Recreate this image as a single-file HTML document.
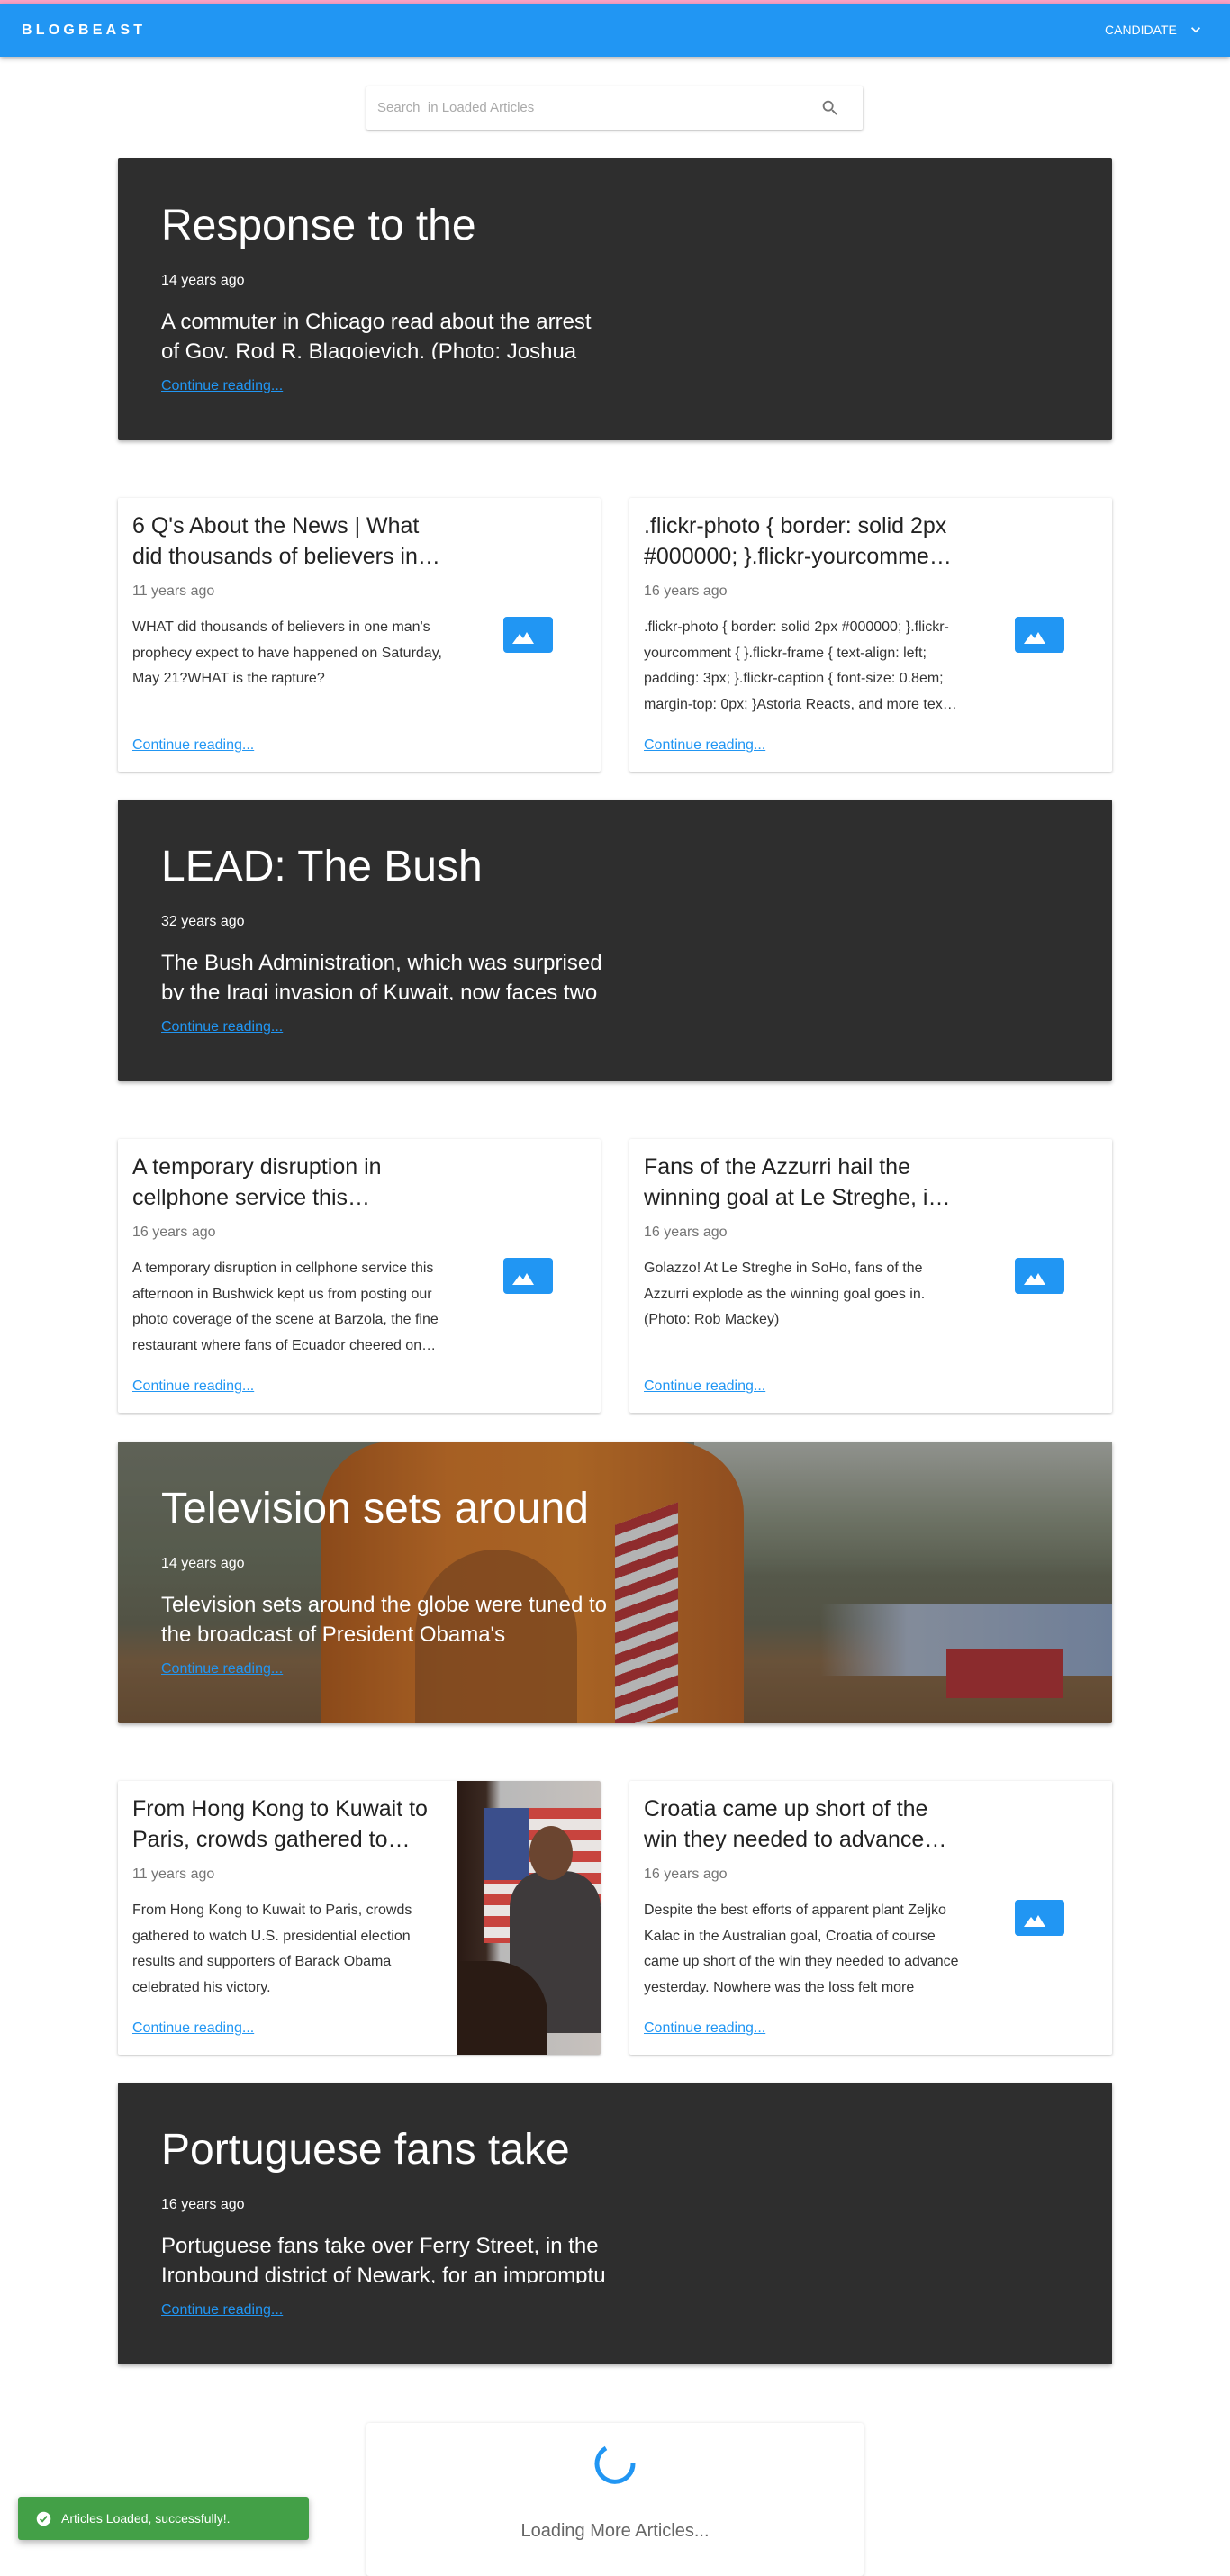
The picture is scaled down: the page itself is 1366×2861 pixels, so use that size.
<!DOCTYPE html>
<html><head><meta charset="utf-8"><style>
*{margin:0;padding:0;box-sizing:border-box}
body{width:1366px;height:2841px;background:#fff;font-family:"Liberation Sans",Arial,sans-serif;position:relative;overflow:hidden}
.abs{position:absolute}
#pink{left:0;top:0;width:1366px;height:4px;background:#f8a1c4}
#hdr{left:0;top:4px;width:1366px;height:59px;background:#2196f3;box-shadow:0 2px 5px rgba(0,0,0,.3)}
.logo{left:24px;top:20px;color:#fff;font-weight:bold;font-size:16px;letter-spacing:4.2px;line-height:20px}
.cand{left:1227px;top:21px;color:#fff;font-size:14px;line-height:16px}
.search{left:407px;top:96px;width:551px;height:48px;background:#fff;box-shadow:0 1px 3px rgba(0,0,0,.3);border-radius:2px}
.search span{position:absolute;left:12px;top:15px;font-size:15px;color:#aaa;line-height:18px}
.hero{left:131px;width:1104px;height:313px;background:#2e2e2e;border-radius:2px;box-shadow:0 2px 4px rgba(0,0,0,.3);overflow:hidden}
.hero .t{position:absolute;left:48px;top:47px;font-size:48px;line-height:56px;color:#fff;white-space:nowrap}
.hero .d{position:absolute;left:48px;top:126px;font-size:16px;line-height:20px;color:#fff}
.hero .p{position:absolute;left:48px;top:165px;width:495px;height:58px;overflow:hidden;font-size:24px;line-height:33px;color:#fff}
.hero .c,.card .c{position:absolute;left:48px;top:243px;font-size:16px;line-height:20px;color:#2196f3;text-decoration:underline}
.card{width:536px;height:304px;background:#fff;border-radius:2px;box-shadow:0 1px 3px rgba(0,0,0,.25);overflow:hidden}
.card .t{position:absolute;left:16px;top:14px;width:345px;font-size:25px;line-height:34px;color:#222;display:-webkit-box;-webkit-line-clamp:2;-webkit-box-orient:vertical;overflow:hidden}
.card .d{position:absolute;left:16px;top:94px;font-size:16px;line-height:20px;color:#757575}
.card .p{position:absolute;left:16px;top:130px;width:350px;font-size:16px;line-height:28.5px;color:#333;display:-webkit-box;-webkit-line-clamp:4;-webkit-box-orient:vertical;overflow:hidden}
.card .c{left:16px;top:265px}
.card svg.im{position:absolute;left:428px;top:132px}
.L{left:131px}.R{left:699px}
</style></head><body>
<div id="pink" class="abs"></div>
<div id="hdr" class="abs">
<div class="abs logo">BLOGBEAST</div>
<div class="abs cand">CANDIDATE</div>
<svg class="abs" style="left:1318px;top:19px" width="20" height="20" viewBox="0 0 24 24"><path d="M7.4 8.6L12 13.2l4.6-4.6L18 10l-6 6-6-6z" fill="#fff"/></svg>
</div>
<div class="abs search"><span>Search &nbsp;in Loaded Articles</span>
<svg style="position:absolute;left:504px;top:13px" width="22" height="22" viewBox="0 0 24 24"><path d="M15.5 14h-.8l-.3-.3A6.5 6.5 0 1 0 9.5 16a6.5 6.5 0 0 0 4.2-1.6l.3.3v.8l5 5 1.5-1.5-5-5zm-6 0A4.5 4.5 0 1 1 14 9.5 4.5 4.5 0 0 1 9.5 14z" fill="#757575"/></svg></div>

<div class="abs hero" style="top:176px"><div class="t">Response to the</div><div class="d">14 years ago</div><div class="p">A commuter in Chicago read about the arrest of Gov. Rod R. Blagojevich. (Photo: Joshua Lott for The New York Times)</div><div class="c">Continue reading...</div></div>

<div class="abs card L" style="top:553px"><div class="t">6 Q's About the News | What did thousands of believers in one man's prophecy</div><div class="d">11 years ago</div><div class="p">WHAT did thousands of believers in one man's prophecy expect to have happened on Saturday, May 21?WHAT is the rapture?</div>
<svg class="im" width="55" height="40" viewBox="0 0 55 40"><rect width="55" height="40" rx="4" fill="#2196f3"/><path d="M10 30L18 19l4 5 4-7 8 13z" fill="#fff"/></svg><div class="c">Continue reading...</div></div>
<div class="abs card R" style="top:553px"><div class="t">.flickr-photo { border: solid 2px #000000; }.flickr-yourcomment { }.flickr-frame</div><div class="d">16 years ago</div><div class="p">.flickr-photo { border: solid 2px #000000; }.flickr-yourcomment { }.flickr-frame { text-align: left; padding: 3px; }.flickr-caption { font-size: 0.8em; margin-top: 0px; }Astoria Reacts, and more text here</div>
<svg class="im" width="55" height="40" viewBox="0 0 55 40"><rect width="55" height="40" rx="4" fill="#2196f3"/><path d="M10 30L18 19l4 5 4-7 8 13z" fill="#fff"/></svg><div class="c">Continue reading...</div></div>

<div class="abs hero" style="top:888px"><div class="t">LEAD: The Bush</div><div class="d">32 years ago</div><div class="p">The Bush Administration, which was surprised by the Iraqi invasion of Kuwait, now faces two problems</div><div class="c">Continue reading...</div></div>

<div class="abs card L" style="top:1265px"><div class="t">A temporary disruption in cellphone service this afternoon in Bushwick</div><div class="d">16 years ago</div><div class="p">A temporary disruption in cellphone service this afternoon in Bushwick kept us from posting our photo coverage of the scene at Barzola, the fine restaurant where fans of Ecuador cheered on their team</div>
<svg class="im" width="55" height="40" viewBox="0 0 55 40"><rect width="55" height="40" rx="4" fill="#2196f3"/><path d="M10 30L18 19l4 5 4-7 8 13z" fill="#fff"/></svg><div class="c">Continue reading...</div></div>
<div class="abs card R" style="top:1265px"><div class="t">Fans of the Azzurri hail the winning goal at Le Streghe, in SoHo</div><div class="d">16 years ago</div><div class="p">Golazzo! At Le Streghe in SoHo, fans of the Azzurri explode as the winning goal goes in. (Photo: Rob Mackey)</div>
<svg class="im" width="55" height="40" viewBox="0 0 55 40"><rect width="55" height="40" rx="4" fill="#2196f3"/><path d="M10 30L18 19l4 5 4-7 8 13z" fill="#fff"/></svg><div class="c">Continue reading...</div></div>

<div class="abs hero" style="top:1601px;background:linear-gradient(180deg,#7a7e70 0,#6f7563 40%,#6a6a58 65%,#87694a 78%,#7a5c3e 100%)">
<div class="abs" style="left:640px;top:0;width:464px;height:150px;background:linear-gradient(180deg,#b9bcb6,#8a917f 60%,transparent)"></div>
<div class="abs" style="left:780px;top:180px;width:324px;height:80px;background:linear-gradient(90deg,rgba(170,180,198,0),#a8b3c6 30%,#8ea2c2)"></div>
<div class="abs" style="left:920px;top:230px;width:130px;height:55px;background:#b3383a"></div>
<div class="abs" style="left:225px;top:0;width:470px;height:313px;background:linear-gradient(90deg,#b25f22,#d57a2e 30%,#d8802f 60%,#b8642a);border-radius:80px 80px 0 0"></div>
<div class="abs" style="left:330px;top:120px;width:180px;height:193px;background:#8a5028;border-radius:50% 50% 0 0;opacity:.6"></div>
<div class="abs" style="left:552px;top:80px;width:70px;height:233px;background:repeating-linear-gradient(180deg,#b8393a 0,#b8393a 12px,#e6e6e6 12px,#e6e6e6 24px);transform:skewY(-20deg)"></div>
<div class="abs" style="left:0;top:0;width:1104px;height:313px;background:rgba(0,0,0,.22)"></div>
<div class="t">Television sets around</div><div class="d">14 years ago</div><div class="p">Television sets around the globe were tuned to the broadcast of President Obama's inauguration</div><div class="c">Continue reading...</div></div>

<div class="abs card L" style="top:1978px"><div class="t">From Hong Kong to Kuwait to Paris, crowds gathered to watch U.S.</div><div class="d">11 years ago</div><div class="p">From Hong Kong to Kuwait to Paris, crowds gathered to watch U.S. presidential election results and supporters of Barack Obama celebrated his victory.</div>
<div class="abs" style="left:377px;top:0;width:159px;height:304px;background:linear-gradient(90deg,#2a1a14 0,#3b2a22 20%,#b9b9b9 30%,#c7c1bd 100%)">
<div class="abs" style="left:30px;top:30px;width:129px;height:150px;background:repeating-linear-gradient(180deg,#c8443e 0,#c8443e 12px,#e9e4e2 12px,#e9e4e2 24px)"></div>
<div class="abs" style="left:30px;top:30px;width:50px;height:80px;background:#3b4f8c"></div>
<div class="abs" style="left:58px;top:100px;width:101px;height:180px;background:#3e3a3b;border-radius:40px 40px 0 0"></div>
<div class="abs" style="left:80px;top:50px;width:48px;height:60px;background:#6b4530;border-radius:50%"></div>
<div class="abs" style="left:0;top:200px;width:100px;height:104px;background:#2a1b14;border-radius:0 60px 0 0"></div>
</div><div class="c">Continue reading...</div></div>
<div class="abs card R" style="top:1978px"><div class="t">Croatia came up short of the win they needed to advance yesterday</div><div class="d">16 years ago</div><div class="p">Despite the best efforts of apparent plant Zeljko Kalac in the Australian goal, Croatia of course came up short of the win they needed to advance yesterday. Nowhere was the loss felt more</div>
<svg class="im" width="55" height="40" viewBox="0 0 55 40"><rect width="55" height="40" rx="4" fill="#2196f3"/><path d="M10 30L18 19l4 5 4-7 8 13z" fill="#fff"/></svg><div class="c">Continue reading...</div></div>

<div class="abs hero" style="top:2313px"><div class="t">Portuguese fans take</div><div class="d">16 years ago</div><div class="p">Portuguese fans take over Ferry Street, in the Ironbound district of Newark, for an impromptu celebration</div><div class="c">Continue reading...</div></div>

<div class="abs" style="left:407px;top:2691px;width:552px;height:170px;background:#fff;border-radius:3px;box-shadow:0 1px 4px rgba(0,0,0,.2)">
<svg class="abs" style="left:252px;top:21px" width="48" height="48" viewBox="0 0 48 48"><path d="M14 7A20 20 0 1 0 44 24" fill="none" stroke="#2196f3" stroke-width="5"/></svg>
<div class="abs" style="left:0;width:552px;top:108px;text-align:center;font-size:20px;line-height:24px;color:#666">Loading More Articles...</div>
</div>

<div class="abs" style="left:20px;top:2773px;width:323px;height:48px;background:#43a047;border-radius:3px;box-shadow:0 3px 8px rgba(0,0,0,.3)">
<svg class="abs" style="left:20px;top:16px" width="17" height="17" viewBox="0 0 24 24"><circle cx="12" cy="12" r="11" fill="#fff"/><path d="M6.5 12.5l3.5 3.5 7-8" fill="none" stroke="#43a047" stroke-width="2.6"/></svg>
<div class="abs" style="left:48px;top:16px;font-size:14px;line-height:16px;color:#fff">Articles Loaded, successfully!.</div>
</div>
</body></html>
